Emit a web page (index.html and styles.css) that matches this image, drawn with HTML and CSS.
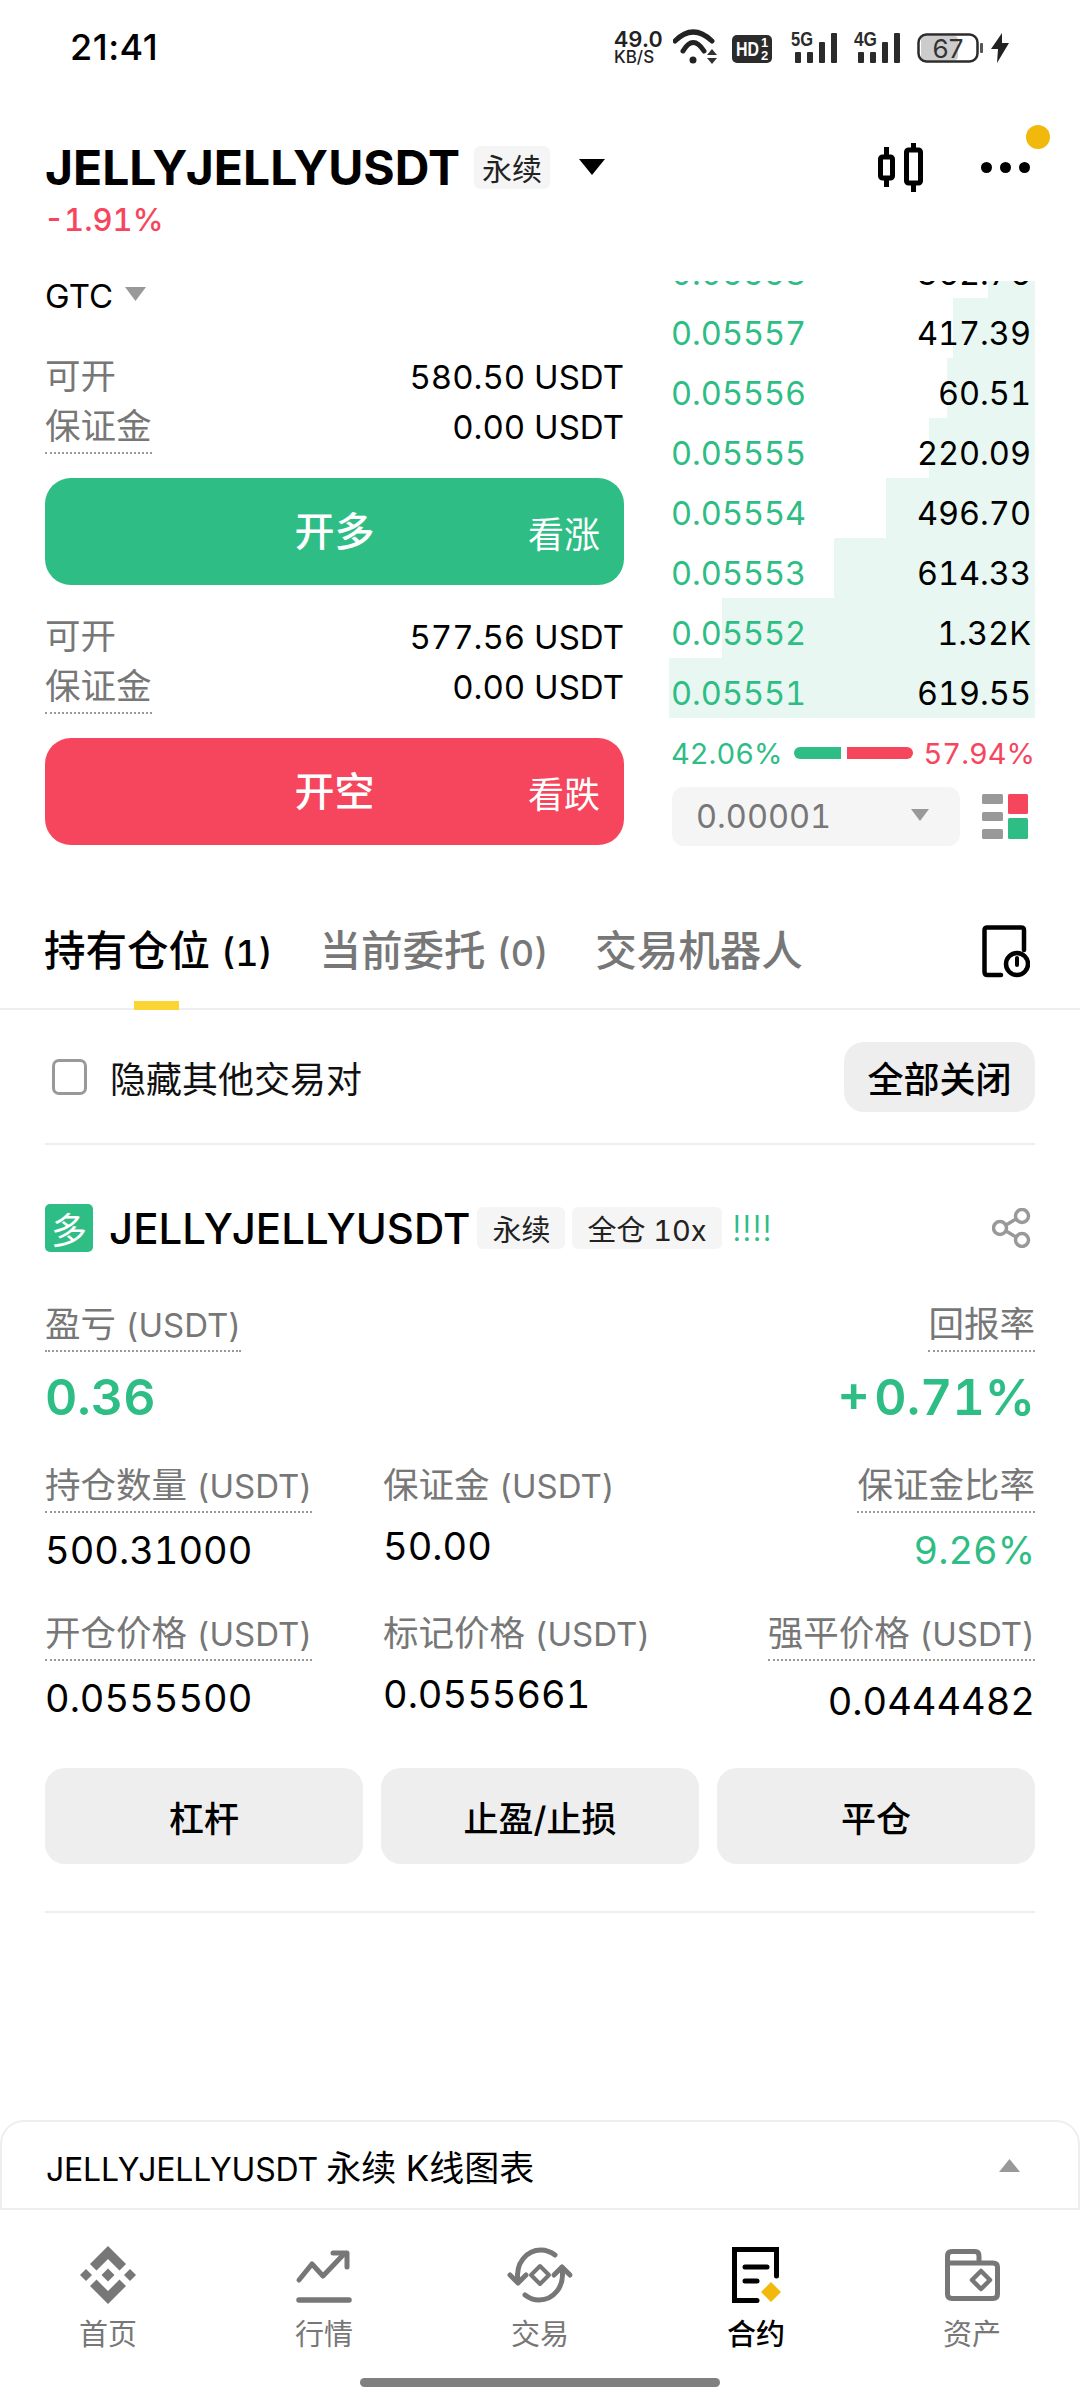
FILE: index.html
```html
<!DOCTYPE html>
<html lang="zh-CN">
<head>
  <meta charset="UTF-8" />
  <meta name="viewport" content="width=device-width, initial-scale=1.0" />
  <title>JELLYJELLYUSDT 永续</title>
  <link rel="stylesheet" href="styles.css">
</head>
<body>
  <div class="page">

    <!-- 状态栏 -->
    <div class="statusbar">
      <span class="time">21:41</span>
      <div class="status-icons">
        <div class="netspeed"><b>49.0</b><span>KB/S</span></div>
        <svg class="st-wifi" viewBox="0 0 59 44"><g fill="none" stroke="#222" stroke-width="5" stroke-linecap="round"><path d="M2 16Q20 -2 39 16"/><path d="M10 26Q20 9 31 26"/></g><circle cx="20" cy="35" r="3.5" fill="#222"/><path d="M34 30L39 24L44 30ZM34 33H44L39 39Z" fill="#333"/></svg>
        <svg class="st-hd" viewBox="0 0 59 44"><rect x="0" y="10" width="40" height="28" rx="5" fill="#2b2b2b"/><text x="4" y="31" class="hd-text" textLength="23" lengthAdjust="spacingAndGlyphs">HD</text><text x="29" y="22" class="hd-sub">1</text><text x="29" y="35" class="hd-sub">2</text></svg>
        <svg class="st-signal" viewBox="0 0 63 44"><text x="0" y="21" class="sig-text" textLength="22" lengthAdjust="spacingAndGlyphs">5G</text><g fill="#2b2b2b"><rect x="4" y="27" width="6" height="11" rx="1"/><rect x="16" y="27" width="6" height="11" rx="1"/><rect x="28" y="17" width="6" height="21" rx="1"/><rect x="40" y="8" width="6" height="30" rx="1"/></g></svg>
        <svg class="st-signal" viewBox="0 0 63 44"><text x="0" y="21" class="sig-text" textLength="23" lengthAdjust="spacingAndGlyphs">4G</text><g fill="#2b2b2b"><rect x="4" y="27" width="6" height="11" rx="1"/><rect x="16" y="27" width="6" height="11" rx="1"/><rect x="28" y="17" width="6" height="21" rx="1"/><rect x="40" y="8" width="6" height="30" rx="1"/></g></svg>
        <svg class="st-batt" viewBox="0 0 74 44"><rect x="4" y="11" width="37" height="24" rx="4" fill="#ccc"/><rect x="1.5" y="9.5" width="59" height="27" rx="8" fill="none" stroke="#2b2b2b" stroke-width="2.5"/><rect x="63" y="18" width="3" height="10" rx="1" fill="#555"/><text x="31" y="33" class="batt-text" text-anchor="middle">67</text></svg>
        <svg class="st-bolt" viewBox="0 0 18 44"><path d="M11 8L0 24H7L6 38L18 18H11Z" fill="#222"/></svg>
      </div>
    </div>

    <!-- 标题 -->
    <div class="header">
      <div class="title-row">
        <span class="title">JELLYJELLYUSDT</span>
        <span class="tag tag-title">永续</span>
        <svg class="title-arrow" viewBox="0 0 26 16"><path d="M0 0H26L13 16Z" fill="#000"/></svg>
        <svg class="candle-icon" viewBox="0 0 45 49"><g fill="none" stroke="#000" stroke-width="5"><rect x="2.500" y="14" width="12" height="21" rx="2"/><rect x="28.500" y="7" width="14" height="33" rx="2"/><path d="M8.500 4V14M8.500 35V44M35.500 0V7M35.500 40V49"/></g></svg>
        <div class="more-dots"><i></i><i></i><i></i></div>
      </div>
      <div class="change">-1.91%</div>
      <span class="notify-dot"></span>
    </div>

    <!-- 下单 + 盘口 -->
    <div class="trade">
      <div class="order-form">
        <div class="gtc">GTC<svg class="gtc-arrow" viewBox="0 0 21 14"><path d="M0 0H21L10.5 14Z" fill="#999"/></svg></div>

        <div class="avail avail-first">
          <div class="avail-row"><span class="muted">可开</span><span>580.50 USDT</span></div>
          <div class="avail-row"><span class="muted dotted">保证金</span><span>0.00 USDT</span></div>
        </div>
        <div class="big-btn btn-long"><span></span><b>开多</b><span class="side-text">看涨</span></div>

        <div class="avail">
          <div class="avail-row"><span class="muted">可开</span><span>577.56 USDT</span></div>
          <div class="avail-row"><span class="muted dotted">保证金</span><span>0.00 USDT</span></div>
        </div>
        <div class="big-btn btn-short"><span></span><b>开空</b><span class="side-text">看跌</span></div>
      </div>

      <div class="book">
        <div class="book-rows">
          <div class="book-row"><div class="bar" style="width:47px"></div><span class="price">0.05558</span><span class="qty">362.76</span></div>
          <div class="book-row"><div class="bar" style="width:82px"></div><span class="price">0.05557</span><span class="qty">417.39</span></div>
          <div class="book-row"><div class="bar" style="width:88px"></div><span class="price">0.05556</span><span class="qty">60.51</span></div>
          <div class="book-row"><div class="bar" style="width:106px"></div><span class="price">0.05555</span><span class="qty">220.09</span></div>
          <div class="book-row"><div class="bar" style="width:149px"></div><span class="price">0.05554</span><span class="qty">496.70</span></div>
          <div class="book-row"><div class="bar" style="width:201px"></div><span class="price">0.05553</span><span class="qty">614.33</span></div>
          <div class="book-row"><div class="bar" style="width:313px"></div><span class="price">0.05552</span><span class="qty">1.32K</span></div>
          <div class="book-row"><div class="bar" style="width:366px"></div><span class="price">0.05551</span><span class="qty">619.55</span></div>
        </div>
        <div class="ratio">
          <span class="green">42.06%</span>
          <div class="ratio-bar"><i class="ratio-buy"></i><i class="ratio-sell"></i></div>
          <span class="red">57.94%</span>
        </div>
        <div class="depth-row">
          <div class="depth-select"><span>0.00001</span><svg class="depth-arrow" viewBox="0 0 18 12"><path d="M0 0H18L9 12Z" fill="#999"/></svg></div>
          <svg class="layout-icon" viewBox="0 0 46 45"><g fill="#999"><rect x="0" y="0" width="21" height="10" rx="1.5"/><rect x="0" y="18" width="21" height="9" rx="1.5"/><rect x="0" y="35" width="21" height="10" rx="1.5"/></g><rect x="26" y="0" width="20" height="20" rx="1.5" fill="#F6465D"/><rect x="26" y="24" width="20" height="21" rx="1.5" fill="#2EBD85"/></svg>
        </div>
      </div>
    </div>

    <!-- 选项卡 -->
    <div class="tabs">
      <span class="tab tab-active">持有仓位 <span class="tab-count">(1)</span></span>
      <span class="tab">当前委托 <span class="tab-count">(0)</span></span>
      <span class="tab">交易机器人</span>
      <svg class="history-icon" viewBox="0 0 48 53"><g fill="none" stroke="#000" stroke-width="4.5" stroke-linecap="round"><path d="M42 25V5Q42 2.500 39 2.500H5.500Q2.500 2.500 2.500 5V47Q2.500 50 5.500 50H19"/><circle cx="35" cy="39" r="11"/><path d="M35 33V40" stroke-width="4"/></g></svg>
      <span class="tab-line"></span>
    </div>

    <div class="filter">
      <span class="checkbox"></span>
      <span class="filter-text">隐藏其他交易对</span>
      <span class="close-all">全部关闭</span>
    </div>

    <!-- 持仓卡片 -->
    <div class="position">
      <div class="pos-head">
        <span class="pos-badge">多</span>
        <span class="pos-name">JELLYJELLYUSDT</span>
        <span class="tag tag-pos">永续</span>
        <span class="tag tag-pos">全仓 10x</span>
        <span class="pos-risk">!!!!</span>
        <svg class="share-icon" viewBox="0 0 40 40"><g fill="none" stroke="#999" stroke-width="3.500"><circle cx="30" cy="8" r="6.500"/><circle cx="8" cy="20" r="6.500"/><circle cx="30" cy="32" r="6.500"/><path d="M14 17L24 11M14 23L24 29"/></g></svg>
      </div>

      <div class="stats">
        <div class="stat">
          <span class="muted dotted">盈亏 <span class="unit">(USDT)</span></span>
          <span class="stat-big green">0.36</span>
        </div>
        <div class="stat stat-end col3">
          <span class="muted dotted">回报率</span>
          <span class="stat-big stat-roe green">+ 0.71%</span>
        </div>

        <div class="stat">
          <span class="muted dotted">持仓数量 <span class="unit">(USDT)</span></span>
          <span class="stat-val">500.31000</span>
        </div>
        <div class="stat">
          <span class="muted dotted nodot">保证金 <span class="unit">(USDT)</span></span>
          <span class="stat-val val-up">50.00</span>
        </div>
        <div class="stat stat-end">
          <span class="muted dotted">保证金比率</span>
          <span class="stat-val green">9.26%</span>
        </div>

        <div class="stat">
          <span class="muted dotted">开仓价格 <span class="unit">(USDT)</span></span>
          <span class="stat-val">0.0555500</span>
        </div>
        <div class="stat">
          <span class="muted dotted nodot">标记价格 <span class="unit">(USDT)</span></span>
          <span class="stat-val val-up">0.0555661</span>
        </div>
        <div class="stat stat-end">
          <span class="muted dotted">强平价格 <span class="unit">(USDT)</span></span>
          <span class="stat-val val-down">0.0444482</span>
        </div>
      </div>

      <div class="pos-btns">
        <span class="pos-btn">杠杆</span>
        <span class="pos-btn">止盈/止损</span>
        <span class="pos-btn">平仓</span>
      </div>
    </div>

    <div class="bottom">
      <div class="chart-panel">
        <span>JELLYJELLYUSDT <span class="panel-cn">永续 K线图表</span></span>
        <svg class="panel-arrow" viewBox="0 0 21 13"><path d="M10.500 0L21 13H0Z" fill="#999"/></svg>
      </div>

      <div class="nav">
        <div class="nav-item">
          <svg class="nav-icon" viewBox="0 0 60 60"><g fill="#777"><path d="M30 23.500L36.500 30L30 36.500L23.500 30Z"/><path d="M8 24L14 30L8 36L2 30Z"/><path d="M52 24L58 30L52 36L46 30Z"/><path d="M30 1L48 19L41.500 25.500L30 14L18.500 25.500L12 19Z"/><path d="M30 59L48 41L41.500 34.500L30 46L18.500 34.500L12 41Z"/></g></svg>
          <span>首页</span>
        </div>
        <div class="nav-item">
          <svg class="nav-icon" viewBox="0 0 60 60"><g fill="none" stroke="#777" stroke-width="5" stroke-linecap="round" stroke-linejoin="round"><path d="M5 35L18 19L29 31L50 9"/><path d="M39 8H53V22"/><path d="M5 55H55" stroke-width="5.500"/></g></svg>
          <span>行情</span>
        </div>
        <div class="nav-item">
          <svg class="nav-icon" viewBox="0 0 60 60"><g fill="none" stroke="#777" stroke-width="5" stroke-linecap="round" stroke-linejoin="round"><path d="M8 36C5 18 17 5 31 5C37 5 41 7 45 10"/><path d="M0 30L8 38L16 30"/><path d="M8 36C5 18 17 5 31 5C37 5 41 7 45 10" transform="rotate(180 30 30)"/><path d="M0 30L8 38L16 30" transform="rotate(180 30 30)"/><path d="M30 21L39 30L30 39L21 30Z" stroke-width="4"/></g></svg>
          <span>交易</span>
        </div>
        <div class="nav-item nav-active">
          <svg class="nav-icon" viewBox="0 0 60 60"><g fill="none" stroke="#000" stroke-width="5" stroke-linecap="round"><path d="M50.500 31V4.500H8.500V55.500H31"/><path d="M19 22H41"/><path d="M19 36H31"/></g><path d="M45 37L55 47L45 57L35 47Z" fill="#F0B90B"/></svg>
          <span>合约</span>
        </div>
        <div class="nav-item">
          <svg class="nav-icon" viewBox="0 0 60 60"><g fill="none" stroke="#777" stroke-width="5" stroke-linejoin="round"><path d="M5.500 18V11Q5.500 6.500 10 6.500H33Q37 6.500 37 11V18"/><path d="M5.500 18H51Q55.500 18 55.500 22V49Q55.500 53.500 51 53.500H10Q5.500 53.500 5.500 49Z"/><path d="M39 26L48 35L39 44L30 35Z" stroke-width="4.500"/></g></svg>
          <span>资产</span>
        </div>
      </div>
      <div class="home-bar"></div>
    </div>

  </div>
</body>
</html>
```

FILE: styles.css
```css
* { box-sizing: border-box; }
body { margin: 0; background: #fff; color: #000; font-family: Inter, "Noto Sans CJK SC", sans-serif; font-variant-numeric: tabular-nums; }
.page { width: 1080px; height: 2408px; display: flex; flex-direction: column; overflow: hidden; }
.green { color: #2EBD85; }
.red { color: #F6465D; }
.muted { color: #777; font-size: 35.5px; line-height: 50px; }
.unit { font-size: 33px; }
.dotted { display: inline-block; height: 52px; border-bottom: 2px dotted #999; }

/* status bar */
.statusbar { height: 94px; display: flex; align-items: center; padding: 0 71px 0 70px; justify-content: space-between; }
.time { font-size: 36px; font-weight: 500; font-variant-numeric: normal; letter-spacing: 0.5px; }
.status-icons { display: flex; align-items: center; }
.status-icons svg { display: block; height: 44px; }
.netspeed { width: 59px; display: flex; flex-direction: column; font-weight: 600; color: #222; }
.netspeed b { font-size: 22px; line-height: 20px; font-weight: 600; }
.netspeed span { font-size: 17px; line-height: 17px; font-weight: 500; }
.st-wifi, .st-hd { width: 59px; }
.st-signal { width: 63px; }
.st-batt { width: 74px; }
.st-bolt { width: 18px; }
.hd-text { font: 700 21px "Liberation Sans", sans-serif; fill: #fff; }
.hd-sub { font: 700 13px "Liberation Sans", sans-serif; fill: #fff; }
.sig-text { font: 700 20px "Liberation Sans", sans-serif; fill: #2b2b2b; }
.batt-text { font: 400 26px Inter, sans-serif; fill: #333; }

/* header */
.header { position: relative; height: 187px; padding: 43px 45px 0; }
.title-row { display: flex; align-items: center; height: 60px; }
.title { font-size: 48px; font-weight: 700; }
.tag { display: flex; align-items: center; justify-content: center; background: #f5f5f5; border-radius: 6px; }
.tag-title { width: 76px; height: 43px; margin-left: 14px; font-size: 30px; color: #222; }
.title-arrow { width: 26px; height: 16px; margin-left: 29px; }
.candle-icon { width: 45px; height: 49px; margin-left: auto; margin-right: 58px; }
.more-dots { display: flex; gap: 8px; margin-right: 5px; }
.more-dots i { width: 11px; height: 11px; border-radius: 50%; background: #000; }
.change { margin-top: 3px; margin-left: -1px; font-size: 31px; line-height: 40px; font-weight: 500; color: #F6465D; }
.notify-dot { position: absolute; left: 1026px; top: 31px; width: 24px; height: 24px; border-radius: 50%; background: #F0B90B; }

/* order form + book */
.trade { height: 597px; display: flex; padding: 0 45px; overflow: hidden; flex-shrink: 0; }
.order-form { width: 579px; margin-right: 45px; flex-shrink: 0; }
.gtc { display: flex; align-items: center; height: 30px; line-height: 30px; font-size: 33px; }
.gtc-arrow { width: 21px; height: 14px; margin-left: 12px; margin-top: -4px; }
.avail { margin-top: 27px; font-size: 33px; }
.avail-first { margin-top: 41px; }
.avail-row { display: flex; justify-content: space-between; align-items: flex-start; line-height: 50px; height: 50px; }
.avail-row:last-child { height: 52px; }
.big-btn { display: grid; grid-template-columns: 1fr auto 1fr; align-items: center; height: 107px; margin-top: 24px; border-radius: 26px; color: #fff; }
.big-btn b { padding-bottom: 6px; font-size: 40px; font-weight: 500; }
.side-text { justify-self: end; padding-right: 24px; font-size: 36px; }
.btn-long { background: #2EBD85; }
.btn-short { background: #F6465D; }

.book { width: 366px; flex-shrink: 0; }
.book-rows { margin-top: -43px; }
.book-row { position: relative; display: flex; justify-content: space-between; align-items: center; height: 60px; padding: 11px 4px 0 2px; font-size: 32.5px; }
.bar { position: absolute; top: 0; right: 0; bottom: 0; background: #E8F7F1; }
.price { position: relative; color: #2EBD85; }
.qty { position: relative; color: #000; }
.ratio { display: flex; justify-content: space-between; align-items: center; height: 40px; margin-top: 15px; padding-left: 2px; font-size: 29px; }
.ratio-bar { display: flex; gap: 6px; }
.ratio-bar i { display: block; height: 12px; }
.ratio-buy { width: 47px; background: #2EBD85; border-radius: 6px 0 0 6px; }
.ratio-sell { width: 66px; background: #F6465D; border-radius: 0 6px 6px 0; }
.depth-row { display: flex; align-items: center; margin-top: 14px; padding-left: 3px; }
.depth-select { width: 288px; height: 59px; display: flex; align-items: center; justify-content: space-between; padding: 0 31px 0 24px; background: #f5f5f5; border-radius: 12px; font-size: 32.5px; color: #777; }
.depth-arrow { width: 18px; height: 12px; margin-top: -4px; }
.layout-icon { width: 46px; height: 45px; margin-left: 22px; }

/* tabs */
.tabs { position: relative; height: 132px; display: flex; align-items: flex-start; gap: 47px; padding: 48px 44px 0; border-bottom: 2px solid #eee; flex-shrink: 0; }
.tab { font-size: 41.5px; line-height: 50px; font-weight: 500; color: #777; }
.tab-count { font-size: 36px; }
.tab-active { color: #000; }
.history-icon { width: 48px; height: 53px; margin-left: auto; margin-right: 6px; margin-top: -1px; }
.tab-line { position: absolute; left: 134px; bottom: -2px; width: 45px; height: 9px; background: #FCD535; }

.filter { height: 135px; margin: 0 45px; display: flex; align-items: center; border-bottom: 2px solid #eee; flex-shrink: 0; }
.checkbox { width: 35px; height: 36px; margin-left: 7px; border: 3px solid #999; border-radius: 7px; }
.filter-text { margin-left: 23px; font-size: 36px; color: #111; }
.close-all { margin-left: auto; width: 191px; height: 70px; display: flex; align-items: center; justify-content: center; background: #eee; border-radius: 20px; font-size: 36px; font-weight: 500; }

/* position card */
.position { margin: 0 45px; padding: 59px 0 47px; border-bottom: 2px solid #eee; flex-shrink: 0; }
.pos-head { display: flex; align-items: center; height: 48px; }
.pos-badge { width: 48px; height: 48px; display: flex; align-items: center; justify-content: center; background: #2EBD85; border-radius: 5px; color: #fff; font-size: 36px; }
.pos-name { margin-left: 16px; font-size: 42px; font-weight: 500; }
.tag-pos { height: 42px; padding: 0 15px; margin-left: 7px; font-size: 29px; color: #222; }
.pos-risk { margin-left: 10px; font-size: 36px; font-weight: 300; color: #2EBD85; }
.share-icon { width: 40px; height: 40px; margin-left: auto; margin-right: 3px; }

.stats { display: grid; grid-template-columns: 338px 1fr auto; row-gap: 34px; margin-top: 48px; }
.stat { display: flex; flex-direction: column; align-items: flex-start; }
.stat-end { align-items: flex-end; text-align: right; }
.col3 { grid-column: 3; }
.stat-big { margin-top: 15px; font-size: 50px; line-height: 60px; font-weight: 600; }
.stat-roe { word-spacing: -9px; }
.stat-val { margin-top: 12px; font-size: 38px; line-height: 50px; }
.val-up { margin-top: 8px; }
.val-down { margin-top: 15px; }
.nodot { border-bottom-color: transparent; }

.pos-btns { display: grid; grid-template-columns: repeat(3, 1fr); gap: 18px; margin-top: 42px; }
.pos-btn { height: 96px; display: flex; align-items: center; justify-content: center; background: #eee; border-radius: 20px; font-size: 35px; font-weight: 500; }

/* bottom */
.bottom { margin-top: auto; }
.chart-panel { height: 90px; display: flex; align-items: center; justify-content: space-between; padding: 0 58px 0 44px; border: 2px solid #eee; border-radius: 24px 24px 0 0; font-size: 32px; letter-spacing: -0.2px; }
.panel-cn { font-size: 35px; letter-spacing: 0; }
.panel-arrow { width: 21px; height: 13px; }
.nav { display: grid; grid-template-columns: repeat(5, 1fr); padding-top: 35px; }
.nav-item { display: flex; flex-direction: column; align-items: center; color: #777; font-size: 29px; line-height: 40px; }
.nav-item span { margin-top: 10px; }
.nav-active { color: #000; font-weight: 500; }
.nav-icon { width: 60px; height: 60px; overflow: visible; }
.home-bar { width: 360px; height: 9px; margin: 23px auto 21px; border-radius: 5px; background: #808080; }
```
